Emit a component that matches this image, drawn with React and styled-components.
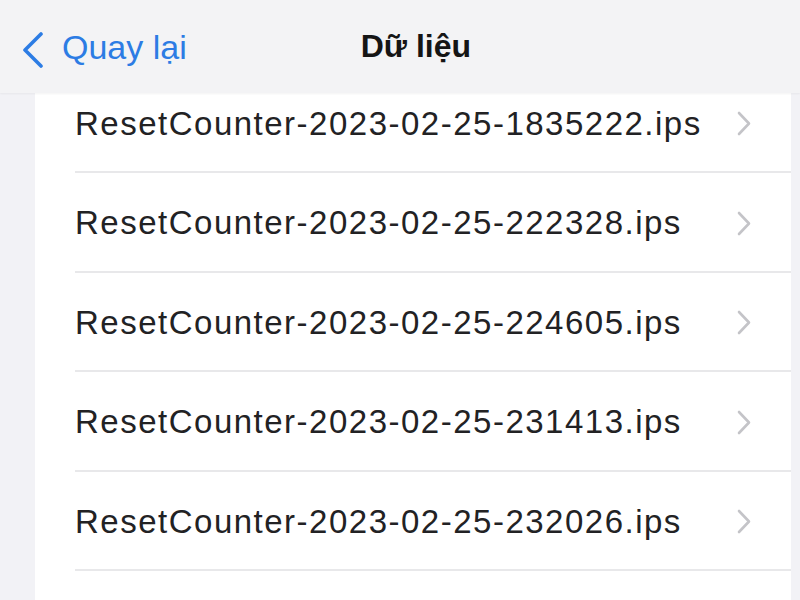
import styled, { createGlobalStyle } from 'styled-components';

const files = [
  'ResetCounter-2023-02-25-1835222.ips',
  'ResetCounter-2023-02-25-222328.ips',
  'ResetCounter-2023-02-25-224605.ips',
  'ResetCounter-2023-02-25-231413.ips',
  'ResetCounter-2023-02-25-232026.ips',
  '',
];

const GlobalStyle = createGlobalStyle`
  html, body {
    margin: 0;
    padding: 0;
    background: #f2f2f6;
    font-family: "Liberation Sans", Arial, sans-serif;
  }
`;

const Page = styled.div`
  height: 100vh;
  display: flex;
  flex-direction: column;
  overflow: hidden;
  background: #f2f2f6;
`;

const NavBar = styled.header`
  height: 93px;
  flex-shrink: 0;
  display: flex;
  align-items: center;
  padding: 4px 0 0 21px;
  background: #f3f3f5;
  box-shadow: 0 1px 2px rgba(0, 0, 0, 0.05);
  position: relative;
  z-index: 2;
  box-sizing: border-box;
`;

const BackButton = styled.button`
  display: flex;
  align-items: center;
  gap: 17px;
  background: none;
  border: none;
  padding: 0;
  margin-top: 2px;
  color: #2c7ce4;
  font-family: inherit;
  font-size: 34px;
  cursor: pointer;

  span {
    margin-top: -4px;
  }
`;

const Title = styled.h1`
  margin: -4px 0 0 174px;
  font-size: 32px;
  font-weight: 700;
  color: #151515;
`;

const Content = styled.main`
  flex: 1;
  overflow: hidden;
  padding: 0 9px 0 35px;
`;

const List = styled.ul`
  list-style: none;
  margin: -19.5px 0 0;
  padding: 0;
  background: #fff;
  height: calc(100% + 19.5px);
`;

const Row = styled.li`
  height: 99.5px;
  box-sizing: border-box;
  margin-left: 40px;
  padding: 3px 39px 0 0;
  display: flex;
  align-items: center;
  justify-content: space-between;
  border-bottom: ${p => (p.$last ? 'none' : '2px solid #e8e8ea')};
`;

const FileName = styled.span`
  font-size: 33px;
  letter-spacing: 1.5px;
  color: #222224;
`;

const Chevron = () => (
  <svg width="16" height="25" viewBox="0 0 16 25" fill="none">
    <path d="M3 2 L13 12.5 L3 23" stroke="#c4c4c8" strokeWidth="2.6" strokeLinecap="round" strokeLinejoin="round" />
  </svg>
);

const BackChevron = () => (
  <svg width="24" height="36" viewBox="0 0 24 36" fill="none">
    <path d="M20 2 L4 18 L20 34" stroke="currentColor" strokeWidth="3.6" strokeLinecap="round" strokeLinejoin="round" />
  </svg>
);

const App = () => (
  <>
    <GlobalStyle />
    <Page>
      <NavBar>
        <BackButton>
          <BackChevron />
          <span>Quay lại</span>
        </BackButton>
        <Title>Dữ liệu</Title>
      </NavBar>
      <Content>
        <List>
          {files.map((name, i) => (
            <Row key={i} $last={i === files.length - 1}>
              <FileName>{name}</FileName>
              {name && <Chevron />}
            </Row>
          ))}
        </List>
      </Content>
    </Page>
  </>
);

export default App;
